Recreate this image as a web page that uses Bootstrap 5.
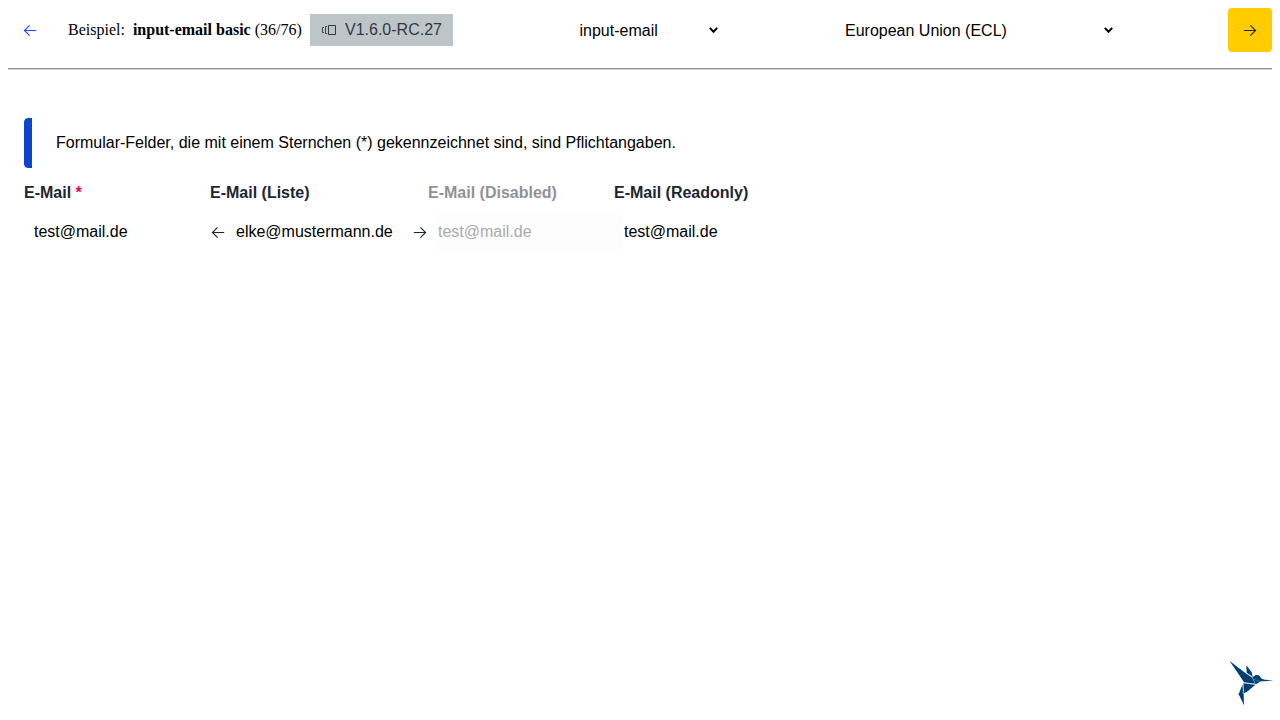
<!DOCTYPE html>
<html lang="de">
<head>
<meta charset="utf-8">
<meta name="viewport" content="width=device-width, initial-scale=1">
<title>input-email basic</title>
<link href="https://cdn.jsdelivr.net/npm/bootstrap@5.3.0/dist/css/bootstrap.min.css" rel="stylesheet">
<script src="https://cdn.jsdelivr.net/npm/bootstrap@5.3.0/dist/js/bootstrap.bundle.min.js" defer></script>
<style>
body { font: 16px/24px "Liberation Sans", Arial, sans-serif; color: #000; background: #fff; overflow: hidden; }
svg { display: block; flex: none; }
.icon-stroke { fill: none; stroke: currentColor; stroke-width: 1.1; }
.topbar { height: 44px; }
.nav-btn { width: 44px; height: 44px; padding: 0; border: 0; border-radius: 4px; }
.nav-prev, .nav-prev:hover { color: #0f4fe0; }
.nav-next, .nav-next:hover { background: #fc0; color: #202532; }
.sample-title { font-family: "Liberation Serif", "Times New Roman", serif; margin-left: 16px; width: 242px; line-height: 44px; }
.version { height: 32px; width: 143px; background: #bec5c9; color: #333a3f; padding-left: 11px; gap: 8px; }
.picker { height: 44px; line-height: 44px; padding-top: 1px; }
.picker-sample { width: 138px; margin-left: 126.5px; }
.picker-theme { width: 268px; margin-left: 127.5px; }
.rule { height: 2px; margin: 16px 0 0; border: 0; border-top: 1px solid #929292; border-bottom: 1px solid #d6d6d6; opacity: 1; }
.content-area { padding: 48px 16px 0; }
.hint { height: 50px; border-radius: 4px; overflow: hidden; }
.hint-bar { width: 8px; background: #0b45cd; border-radius: 4px 0 0 4px; }
.fields { margin-top: 13px; }
.field-a { width: 186px; }
.field-b { width: 218px; }
.field-label { font-weight: 700; color: #202532; line-height: 24px; margin-bottom: 7px; display: block; }
.field-input { height: 40px; line-height: 40px; padding-left: 10px; }
.list-nav { padding: 0 1px; color: #202532; }
.list-value { padding-left: 11px; color: #000; }
.field-muted .field-label { color: #8f9298; }
.field-muted .field-input { margin: 0 -8px 0 8px; padding-left: 2px; background: #fdfdfd; color: #aaa; }
.req { color: #ee0050; }
.bird { right: 5px; bottom: 13px; }
</style>
</head>
<body class="p-2">
<svg width="0" height="0" class="position-absolute" aria-hidden="true">
  <symbol id="arrow-left" viewBox="0 0 14 14"><path class="icon-stroke" d="M13.2 7.5H1.4M6.6 2.3L1.4 7.5L6.6 12.7"/></symbol>
  <symbol id="arrow-right" viewBox="0 0 14 14"><path class="icon-stroke" d="M.8 7.5H12.6M7.4 2.3L12.6 7.5L7.4 12.7"/></symbol>
</svg>
<header class="topbar d-flex align-items-start">
  <button class="btn nav-btn nav-prev d-flex align-items-center justify-content-center" aria-label="Zurück"><svg width="14" height="14"><use href="#arrow-left"/></svg></button>
  <div class="sample-title text-nowrap">Beispiel:&nbsp; <strong>input-email basic</strong> (36/76)</div>
  <div class="version d-flex align-items-center text-nowrap align-self-center">
    <svg width="16" height="12" viewBox="0 0 16 12" fill="none" stroke="currentColor"><path d="M7.5 1.5h7v9h-7z"/><path d="M6.2 2.5H4.5v7h1.7M3 3.5H1.5v5H3" stroke-width=".9"/></svg>
    <span>V1.6.0-RC.27</span>
  </div>
  <div class="picker picker-sample d-flex align-items-center justify-content-between"><span>input-email</span><svg width="9" height="7" viewBox="0 0 9 7"><path d="M.8 .9L4.5 4.8L8.2 .9" fill="none" stroke="#000" stroke-width="2"/></svg></div>
  <div class="picker picker-theme d-flex align-items-center justify-content-between"><span>European Union (ECL)</span><svg width="9" height="7" viewBox="0 0 9 7"><path d="M.8 .9L4.5 4.8L8.2 .9" fill="none" stroke="#000" stroke-width="2"/></svg></div>
  <button class="btn nav-btn nav-next ms-auto d-flex align-items-center justify-content-center" aria-label="Weiter"><svg width="14" height="14"><use href="#arrow-right"/></svg></button>
</header>
<hr class="rule">
<main class="content-area">
  <div class="hint d-flex">
    <div class="hint-bar"></div>
    <div class="ps-4 align-self-center">Formular-Felder, die mit einem Sternchen (*) gekennzeichnet sind, sind Pflichtangaben.</div>
  </div>
  <div class="fields d-flex text-nowrap">
    <div class="field-a"><span class="field-label">E-Mail <span class="req">*</span></span><div class="field-input">test@mail.de</div></div>
    <div class="field-b"><span class="field-label">E-Mail (Liste)</span>
      <div class="field-input list-nav d-flex align-items-center">
        <svg width="14" height="14"><use href="#arrow-left"/></svg>
        <span class="list-value flex-grow-1">elke@mustermann.de</span>
        <svg width="14" height="14"><use href="#arrow-right"/></svg>
      </div>
    </div>
    <div class="field-a field-muted"><span class="field-label">E-Mail (Disabled)</span><div class="field-input">test@mail.de</div></div>
    <div class="field-a"><span class="field-label">E-Mail (Readonly)</span><div class="field-input position-relative">test@mail.de</div></div>
  </div>
</main>
<svg class="bird position-fixed" width="47" height="48" viewBox="24 27 141 144" fill="#003f74" aria-label="KoliBri">
  <path d="M28 32L79 71L97 83L105 101L72 97L51 65Z"/>
  <path d="M79 46L95 67L98 80L80 68Z"/>
  <path d="M98 82L107 75L117 76L125 86L135 89L160 91L134 94L122 94L108 102Z"/>
  <path d="M96 80L110 80L122 94L106 103Z"/>
  <path d="M70 100L106 104L83 124L72 130Z"/>
  <path d="M67 104L71 133L72 166L56 133Z"/>
  <path d="M78 69L97 82L107 103M69 99L106 103M70 98L69 132M97 86L122 95" fill="none" stroke="#9cb6ca" stroke-width="1.2"/>
</svg>
</body>
</html>
